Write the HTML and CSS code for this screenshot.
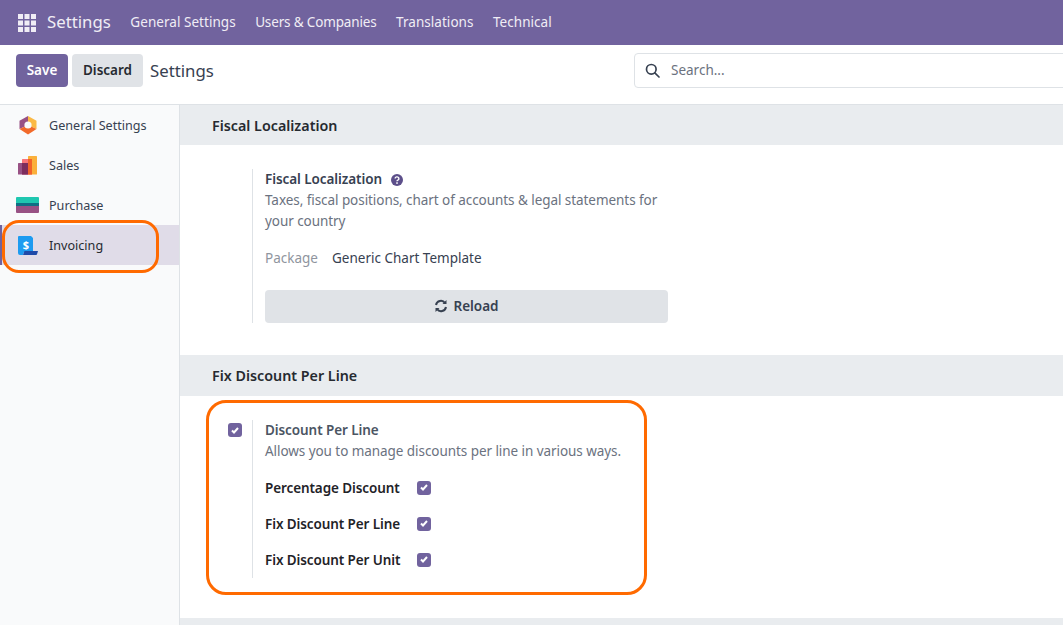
FILE: index.html
```html
<!DOCTYPE html>
<html lang="en">
<head>
<meta charset="utf-8">
<title>Settings</title>
<link rel="stylesheet" href="styles.css">
</head>
<body>
<div class="app">
  <nav class="navbar">
    <svg class="apps" width="18" height="18" viewBox="0 0 18 18"><g fill="#f0edf5"><rect x="0" y="0" width="5" height="5"/><rect x="6.5" y="0" width="5" height="5"/><rect x="13" y="0" width="5" height="5"/><rect x="0" y="6.5" width="5" height="5"/><rect x="6.5" y="6.5" width="5" height="5"/><rect x="13" y="6.5" width="5" height="5"/><rect x="0" y="13" width="5" height="5"/><rect x="6.5" y="13" width="5" height="5"/><rect x="13" y="13" width="5" height="5"/></g></svg>
    <span class="brand">Settings</span>
    <a class="menu">General Settings</a>
    <a class="menu tight">Users &amp; Companies</a>
    <a class="menu">Translations</a>
    <a class="menu">Technical</a>
  </nav>
  <header class="panel">
    <div class="actions">
      <button class="btn primary">Save</button>
      <button class="btn secondary">Discard</button>
      <span class="crumb">Settings</span>
    </div>
    <div class="search">
      <svg width="15" height="15" viewBox="0 0 15 15" fill="none" stroke="#374151" stroke-width="1.7"><circle cx="6.300" cy="6.300" r="4.800"/><path d="M9.800 9.800L14 14" stroke-linecap="round"/></svg>
      <span class="search-text">Search...</span>
    </div>
  </header>
  <div class="body">
    <aside class="sidebar">
      <div class="tab">
        <svg class="tabicon" width="20" height="20" viewBox="0 0 20 20"><path d="M10 1l8.500 4.800V14L10 10z" fill="#fbb945"/><path d="M10 1L1.500 5.800V14L10 10z" fill="#985184"/><path d="M1.500 14L10 10l8.500 4-8.500 5.500z" fill="#f26a2a"/><circle cx="10" cy="10" r="3.600" fill="#f9fafb"/></svg>
        <span>General Settings</span>
      </div>
      <div class="tab">
        <svg class="tabicon" width="20" height="20" viewBox="0 0 20 20"><rect x="10" y="1" width="9" height="18.500" rx=".5" fill="#fbb03b"/><rect x="4" y="4" width="10" height="15.500" rx=".5" fill="#f9757a"/><rect x="10" y="4" width="4" height="15.500" fill="#f2622a"/><rect x="0" y="8" width="10" height="11.500" rx=".5" fill="#985184"/><rect x="4" y="8" width="6" height="11.500" fill="#7d2d5d"/></svg>
        <span>Sales</span>
      </div>
      <div class="tab">
        <svg class="tabicon wide" width="23" height="16" viewBox="0 0 23 16"><rect y="0" width="23" height="6.500" rx="1" fill="#1fc7b0"/><rect y="6" width="23" height="3.500" fill="#0f6f84"/><path d="M0 9h23v6a1 1 0 0 1-1 1H1a1 1 0 0 1-1-1z" fill="#985184"/></svg>
        <span>Purchase</span>
      </div>
      <div class="tab active">
        <svg class="tabicon" width="20" height="20" viewBox="0 0 20 20"><path d="M0 2a1 1 0 0 1 1-1h12l2 2v14H6l-1 3H2a2 2 0 0 1-2-2z" fill="#1d9bf0"/><path d="M6.500 16H20l-1 3.200a1 1 0 0 1-1 .8H5z" fill="#1f4aa8"/><text x="8" y="14" class="dollar">$</text></svg>
        <span>Invoicing</span>
      </div>
    </aside>
    <main class="content">
      <h2 class="section-title">Fiscal Localization</h2>
      <section class="settings fiscal">
        <div class="box-left"></div>
        <div class="box-right">
          <div class="label">Fiscal Localization
            <svg class="help" width="12" height="12" viewBox="0 0 12 12"><circle cx="6" cy="6" r="6" fill="#5c4f8a"/><path d="M4.100 4.600a1.900 1.700 0 1 1 2.800 1.500c-.6.3-.9.6-.9 1.200" fill="none" stroke="#fff" stroke-width="1.400"/><rect x="5.200" y="8.300" width="1.600" height="1.500" fill="#fff"/></svg>
          </div>
          <p class="desc">Taxes, fiscal positions, chart of accounts &amp; legal statements for your country</p>
          <div class="package"><span class="muted">Package</span><span class="value">Generic Chart Template</span></div>
          <button class="reload">
            <svg width="14" height="14" viewBox="0 0 14 14" fill="none" stroke="#374151" stroke-width="2"><path d="M2 6a5 5 0 0 1 9-2"/><path d="M12 8a5 5 0 0 1-9 2"/><path d="M12.500 1v4h-4z" fill="#374151" stroke="none"/><path d="M1.500 13V9h4z" fill="#374151" stroke="none"/></svg>
            Reload
          </button>
        </div>
      </section>
      <h2 class="section-title">Fix Discount Per Line</h2>
      <section class="settings discount">
        <div class="box-left"><span class="check"><svg width="8" height="7" viewBox="0 0 8 7" fill="none" stroke="#fff" stroke-width="2"><path d="M1 3.500l2 2 4-4.500"/></svg></span></div>
        <div class="box-right">
          <div class="label soft">Discount Per Line</div>
          <p class="desc">Allows you to manage discounts per line in various ways.</p>
          <div class="opts">
            <div class="opt"><span class="opt-label">Percentage Discount</span><span class="check"><svg width="8" height="7" viewBox="0 0 8 7" fill="none" stroke="#fff" stroke-width="2"><path d="M1 3.500l2 2 4-4.500"/></svg></span></div>
            <div class="opt"><span class="opt-label">Fix Discount Per Line</span><span class="check"><svg width="8" height="7" viewBox="0 0 8 7" fill="none" stroke="#fff" stroke-width="2"><path d="M1 3.500l2 2 4-4.500"/></svg></span></div>
            <div class="opt"><span class="opt-label">Fix Discount Per Unit</span><span class="check"><svg width="8" height="7" viewBox="0 0 8 7" fill="none" stroke="#fff" stroke-width="2"><path d="M1 3.500l2 2 4-4.500"/></svg></span></div>
          </div>
        </div>
      </section>
      <div class="next-band"></div>
    </main>
  </div>
  <div class="mark mark-tab"></div>
  <div class="mark mark-box"></div>
</div>
</body>
</html>
```

FILE: styles.css
```css
* { box-sizing: border-box; }
html, body { margin: 0; height: 100%; overflow: hidden; }
body { font-family: "Noto Sans", sans-serif; font-size: 13.5px; color: #374151; background: #fff; }
.app { position: relative; width: 1063px; height: 625px; overflow: hidden; display: flex; flex-direction: column; }

.navbar { flex: 0 0 45px; display: flex; align-items: center; background: #71639e; padding-left: 18px; color: #f0edf5; }
.apps { margin-right: 11px; }
.brand { font-size: 16.800px; margin-right: 19.500px; padding-bottom: 2px; }
.menu { font-size: 13.5px; margin-right: 19.500px; padding-bottom: 2px; letter-spacing: .04px; }
.menu.tight { letter-spacing: -.15px; }

.panel { flex: 0 0 60px; display: flex; align-items: flex-start; background: #fff; border-bottom: 1px solid #dee2e6; padding: 9px 0 0 16px; overflow: hidden; }
.actions { flex: 0 0 618px; display: flex; align-items: center; }
.btn { height: 33px; border: 0; border-radius: 4px; font: 600 13.500px "Noto Sans", sans-serif; padding: 0 0 2px; }
.primary { width: 52px; background: #71639e; color: #fff; margin-right: 4px; }
.secondary { width: 71px; background: #e0e3e7; color: #262a30; margin-right: 7px; }
.crumb { font-size: 16.800px; color: #374151; }
.search { flex: 0 0 520px; height: 35px; margin-top: -1px; display: flex; align-items: center; gap: 11px; padding-left: 10px; border: 1px solid #dee2e6; border-radius: 4px; color: #6b7280; }
.search-text { padding-bottom: 2px; }

.body { flex: 1; display: flex; min-height: 0; }
.sidebar { flex: 0 0 180px; background: #f9fafb; border-right: 1px solid #dee2e6; }
.tab { height: 40px; display: flex; align-items: center; padding-left: 18px; font-size: 12.600px; color: #374151; }
.tabicon { flex: 0 0 20px; margin-right: 11px; }
.tabicon.wide { flex: 0 0 23px; margin-left: -2px; margin-right: 10px; }
.tab.active { background: #e0dce8; border-left: 2px solid #71639e; padding-left: 16px; color: #262a30; }
.dollar { font: 700 11px "Noto Sans", sans-serif; fill: #fff; text-anchor: middle; }

.content { flex: 1; min-width: 0; }
.section-title { margin: 0; height: 40px; display: flex; align-items: center; padding-left: 32px; background: #e9ecef; font-size: 14.300px; font-weight: 600; color: #262a30; }
.settings { display: flex; background: #fff; }
.fiscal { height: 210px; padding-top: 24px; }
.discount { height: 223px; padding-top: 24px; border-top: 1px solid #e9ecef; }
.box-left { flex: 0 0 73px; border-right: 1px solid #dee2e6; height: 154px; display: flex; justify-content: flex-end; padding: 3px 10px 0 0; }
.discount .box-left { height: 158px; }
.box-right { padding-left: 12px; width: 416px; }
.label { font-size: 13.500px; font-weight: 600; line-height: 21px; letter-spacing: -.08px; color: #374151; display: flex; align-items: center; gap: 9px; }
.label.soft { color: #4b5563; }
.desc { margin: 0; line-height: 21px; letter-spacing: -.06px; color: #6b7280; }
.package { display: flex; margin-top: 16px; line-height: 21px; }
.muted { color: #8f959e; width: 67px; }
.value { color: #374151; }
.reload { width: 403px; height: 33px; margin-top: 21px; border: 0; border-radius: 4px; padding: 0 0 2px; background: #e0e3e7; font: 600 13.500px "Noto Sans", sans-serif; color: #374151; display: flex; align-items: center; justify-content: center; gap: 5px; }

.check { width: 14px; height: 14px; border-radius: 3px; background: #71639e; display: inline-flex; align-items: center; justify-content: center; }
.opts { margin-top: 15px; display: flex; flex-direction: column; gap: 15px; }
.opt { display: flex; align-items: center; height: 21px; }
.opt-label { width: 152px; font-weight: 600; letter-spacing: -.1px; color: #1f2328; }
.next-band { height: 10px; background: #e9ecef; }

.mark { position: absolute; border: 3px solid #ff6a00; background: transparent; pointer-events: none; }
.mark-tab { left: 2px; top: 220px; width: 157px; height: 53px; border-radius: 17px; }
.mark-box { left: 206px; top: 400px; width: 441px; height: 195px; border-radius: 20px; }
```
